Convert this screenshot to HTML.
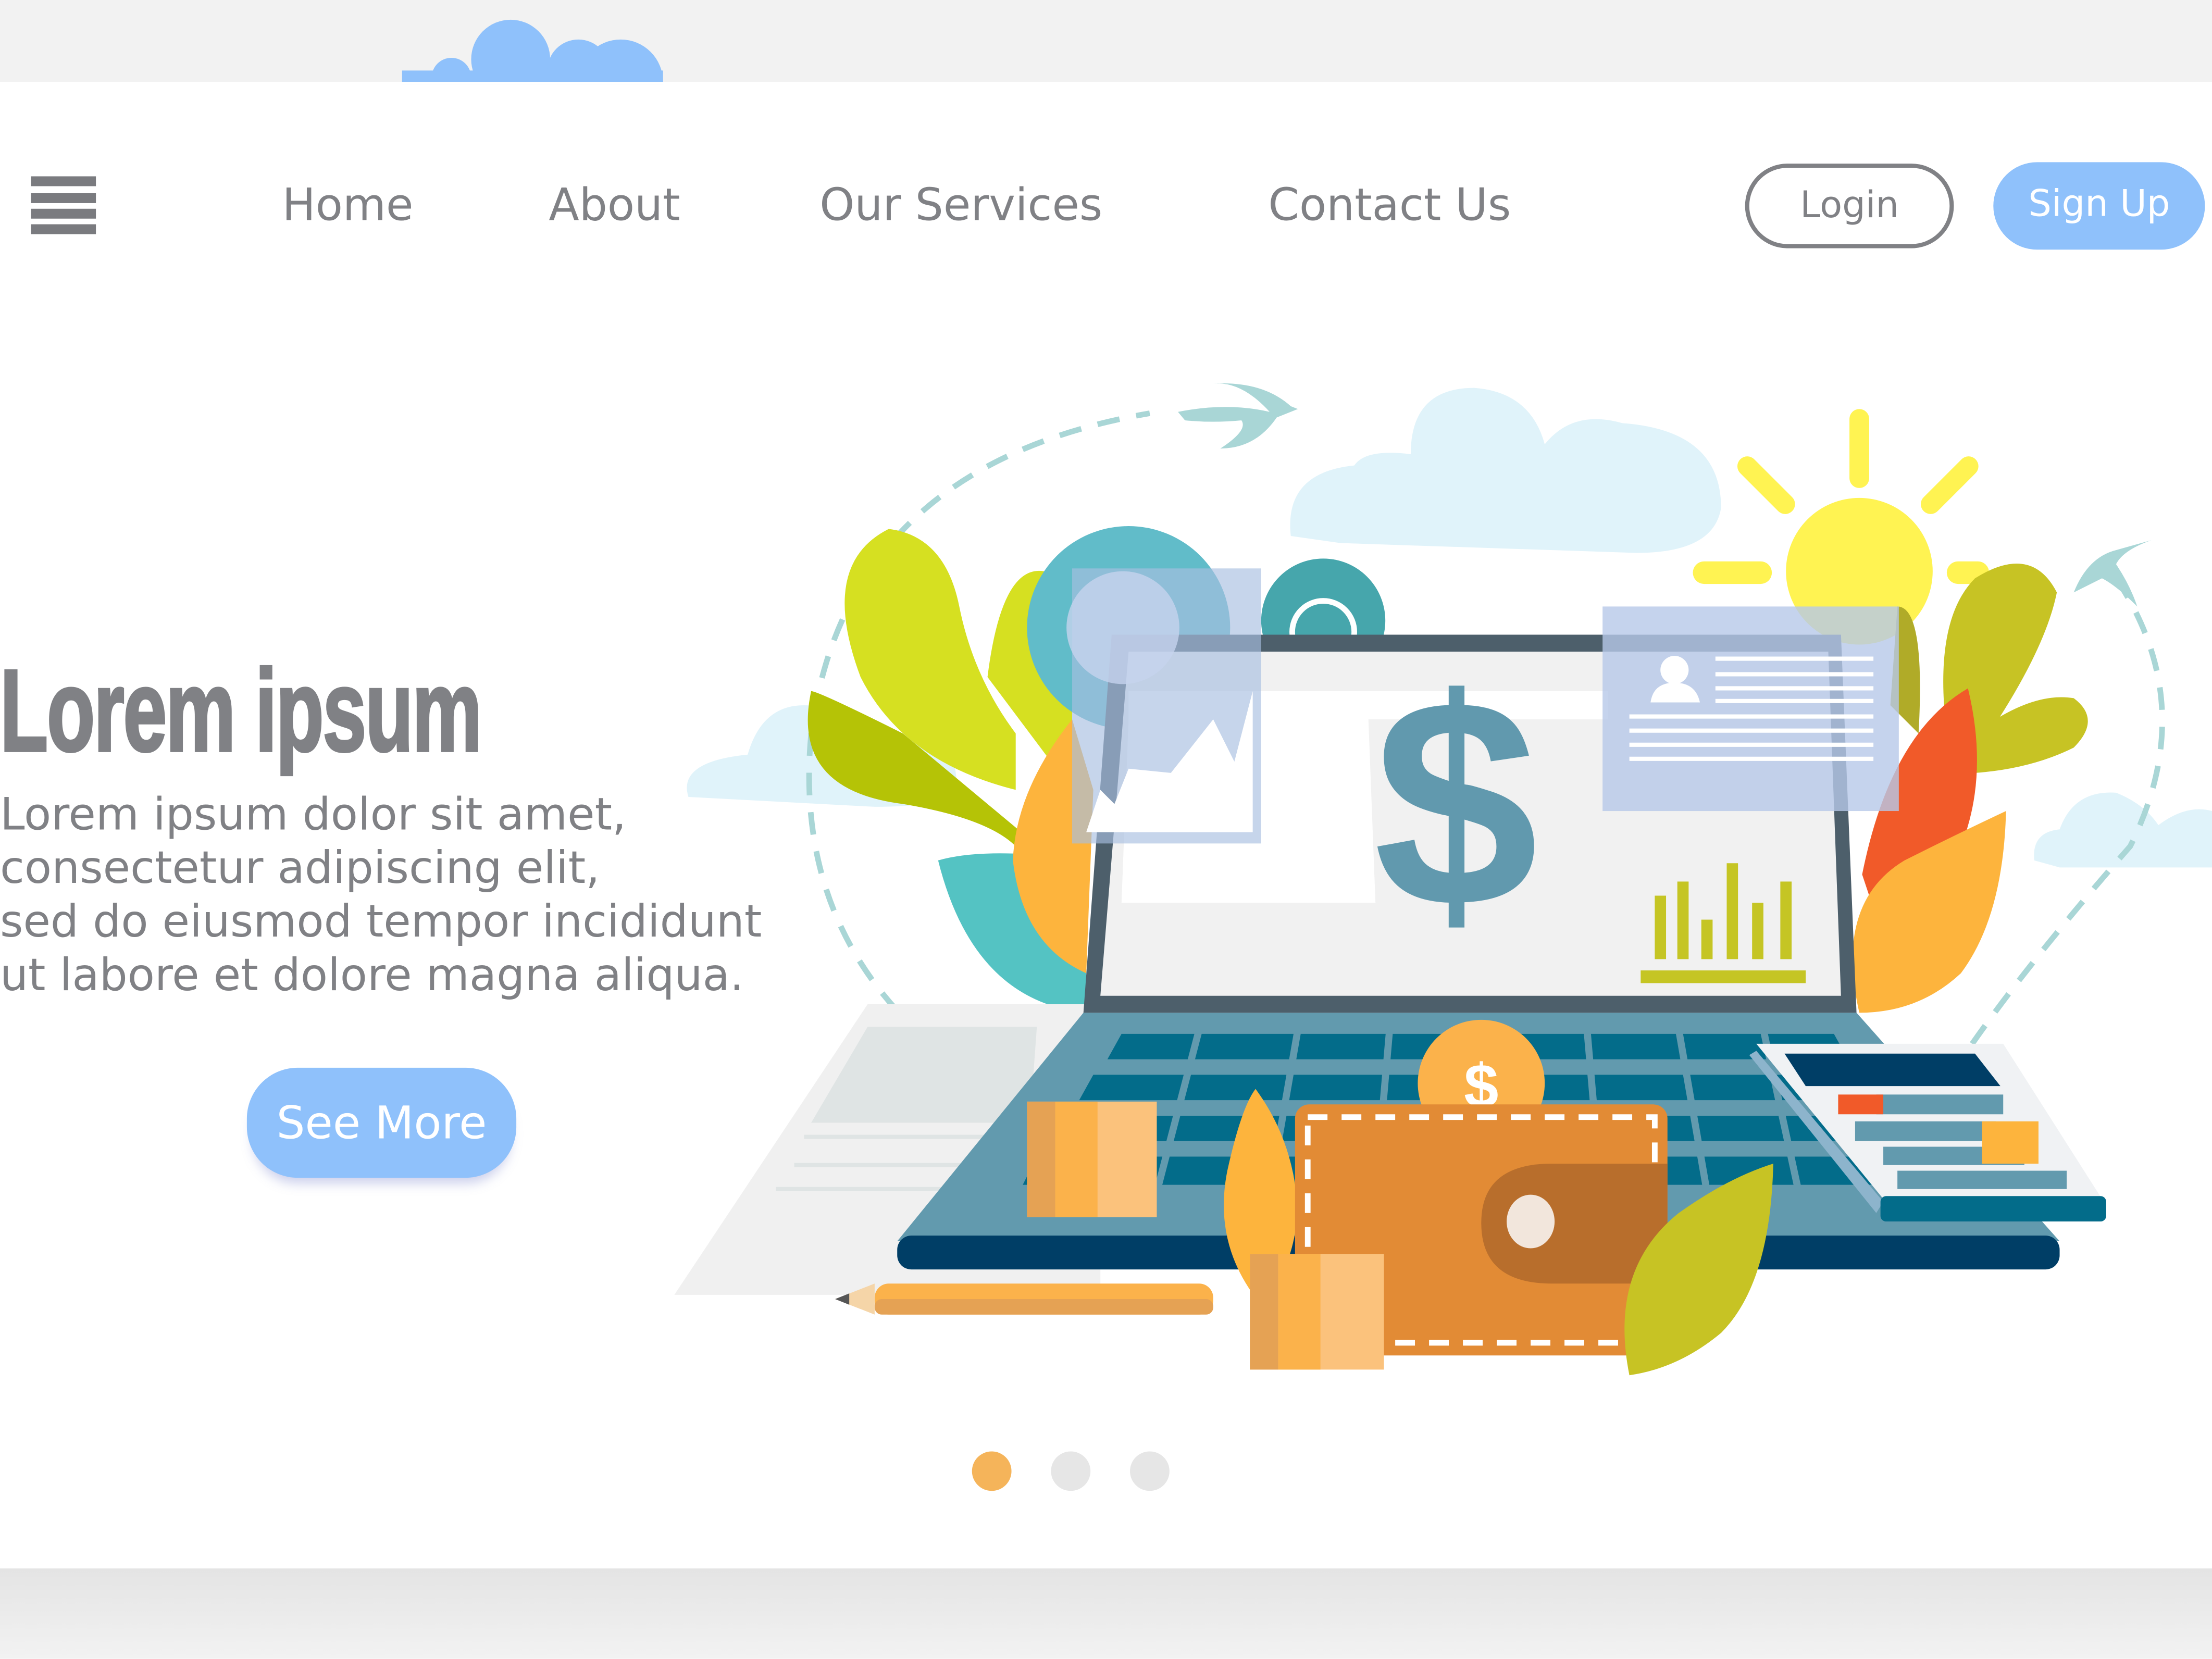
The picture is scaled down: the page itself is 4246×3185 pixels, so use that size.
<!DOCTYPE html>
<html><head><meta charset="utf-8"><style>
html,body{margin:0;padding:0;width:4246px;height:3185px;overflow:hidden;background:#fff}
#w{position:absolute;left:0;top:0;width:1568px;height:1176px;transform:scale(2.70791);transform-origin:0 0;font-family:"DejaVu Sans","Liberation Sans",sans-serif;color:#808185}
.a{position:absolute}
.nav{position:absolute;top:128px;font-size:31.5px;color:#808185;white-space:nowrap}
.ham{position:absolute;left:22px;width:46px;height:7px;background:#7a7b7f}
</style></head><body><div id="w">
<div class="a" style="left:0;top:0;width:1568px;height:58px;background:#f2f2f2"></div>
<div class="a" style="left:0;top:1112px;width:1568px;height:64px;background:linear-gradient(#e4e4e4,#f2f2f2)"></div>
<svg class="a" style="left:0;top:0" width="1568" height="60"><g fill="#8fc1fb"><circle cx="362" cy="42" r="28"/><circle cx="410" cy="50" r="22"/><circle cx="440" cy="58" r="30"/><circle cx="320" cy="55" r="14"/><rect x="285" y="50" width="185" height="10"/></g><rect x="0" y="58" width="1568" height="2" fill="#fff"/></svg>
<div class="ham" style="top:125px"></div><div class="ham" style="top:137px"></div><div class="ham" style="top:148px"></div><div class="ham" style="top:159px"></div>
<div class="nav" style="left:200px">Home</div>
<div class="nav" style="left:389px">About</div>
<div class="nav" style="left:581px">Our Services</div>
<div class="nav" style="left:899px">Contact Us</div>
<div class="a" style="left:1237px;top:116px;width:142px;height:54px;border:3px solid #808185;border-radius:30px;text-align:center;line-height:54px;font-size:26px">Login</div>
<div class="a" style="left:1413px;top:115px;width:150px;height:62px;background:#8fc1fb;border-radius:31px;text-align:center;line-height:60px;font-size:26px;color:#fff">Sign Up</div>
<div class="a" style="left:0;top:456px;font-family:'Liberation Sans Narrow','Liberation Sans',sans-serif;font-weight:bold;font-size:66px;color:#808185;letter-spacing:-1px;transform:scale(0.845,1.25);transform-origin:0 0;white-space:nowrap;-webkit-text-stroke:1.5px #808185">Lorem ipsum</div>
<div class="a" style="left:0;top:559px;font-size:31.5px;line-height:38px;white-space:nowrap">Lorem ipsum dolor sit amet,<br>consectetur adipiscing elit,<br>sed do eiusmod tempor incididunt<br>ut labore et dolore magna aliqua.</div>
<div class="a" style="left:175px;top:757px;width:191px;height:78px;background:#8fc1fb;border-radius:36px;text-align:center;line-height:78px;font-size:32px;color:#fff;box-shadow:0 8px 8px -4px rgba(110,120,200,0.35)">See More</div>
<svg class="a" style="left:0;top:0" width="1568" height="1176">
<g fill="#e6e6e6"><circle cx="759" cy="1043" r="14"/><circle cx="815" cy="1043" r="14"/></g>
<circle cx="703" cy="1043" r="14" fill="#f5b45a"/>
<g fill="#e0f3fa">
<path d="M915 380 Q910 335 960 330 Q968 318 1000 322 Q1000 275 1045 275 Q1085 278 1095 315 Q1115 290 1150 300 Q1220 305 1220 360 Q1215 392 1160 392 L950 385 Z"/>
<path d="M488 565 Q480 540 530 535 Q540 500 570 500 Q590 500 598 520 Q615 510 640 520 Q680 520 678 560 Q670 572 620 572 Z"/>
<path d="M1442 610 Q1440 590 1460 588 Q1470 560 1500 562 Q1520 570 1530 585 Q1550 570 1568 575 L1568 615 L1460 615 Z"/>
</g>
<path d="M700 770 Q560 680 575 520 Q600 330 815 293" fill="none" stroke="#a9d6d6" stroke-width="4" stroke-dasharray="16 12"/>
<path d="M1500 410 Q1560 500 1510 600 Q1440 680 1398 740" fill="none" stroke="#a9d6d6" stroke-width="4" stroke-dasharray="16 12"/>
<path d="M835 292 Q870 285 900 292 Q880 270 860 272 Q895 270 915 288 L920 290 L905 296 Q890 318 865 318 Q885 305 880 298 Q860 300 840 298Z" fill="#a9d6d6"/>
<path d="M1470 420 Q1480 395 1500 390 L1525 383 Q1505 390 1500 400 Q1510 415 1515 430 Q1500 415 1490 410Z" fill="#a9d6d6"/>
<g fill="#fff352"><circle cx="1318" cy="405" r="52"/>
<rect x="1311" y="290" width="14" height="56" rx="7"/>
<rect x="1200" y="398" width="56" height="16" rx="8"/>
<rect x="1380" y="398" width="30" height="16" rx="8"/>
<rect x="1245" y="318" width="14" height="52" rx="7" transform="rotate(-45 1252 344)"/>
<rect x="1375" y="318" width="14" height="52" rx="7" transform="rotate(45 1382 344)"/></g>
<path d="M720 560 Q640 540 610 480 Q580 400 630 375 Q670 380 680 430 Q690 480 720 520Z" fill="#d6e021"/>
<path d="M760 620 Q700 570 640 520 Q580 490 575 490 Q560 560 640 570 Q700 580 720 600Z" fill="#b5c306"/>
<path d="M700 480 Q710 400 740 405 L760 450 L760 560 Z" fill="#d6e021"/>
<path d="M665 610 Q700 600 770 610 L770 718 Q690 710 665 610Z" fill="#54c3c3"/>
<path d="M760 510 Q720 560 718 610 Q725 670 770 690 L775 560Z" fill="#fdb43d"/>
<path d="M1380 520 Q1370 440 1400 410 Q1440 385 1458 420 Q1450 460 1410 520Z" fill="#c7c324"/>
<path d="M1400 520 Q1440 490 1470 495 Q1490 510 1470 530 Q1440 545 1400 548Z" fill="#c7c324"/>
<path d="M1345 430 Q1365 430 1360 520 L1340 500Z" fill="#b0ab28"/>
<path d="M1320 620 Q1340 520 1395 488 Q1410 550 1390 600 Q1360 640 1330 650Z" fill="#f15a29"/>
<path d="M1318 718 Q1300 640 1350 610 Q1390 590 1422 575 Q1420 650 1390 690 Q1360 718 1318 718Z" fill="#fdb43d"/>
<circle cx="800" cy="445" r="72" fill="#61bcc9"/>
<circle cx="938" cy="440" r="44" fill="#46a6ac"/>
<circle cx="938" cy="448" r="22" fill="none" stroke="#fff" stroke-width="4"/>
<path d="M478 918 L615 712 L780 712 L780 918Z" fill="#f0f0f0"/>
<path d="M575 796 L615 728 L735 728 L730 796Z" fill="#dfe4e4"/>
<g stroke="#dfe4e4" stroke-width="3"><line x1="570" y1="806" x2="720" y2="806"/><line x1="563" y1="826" x2="720" y2="826"/><line x1="550" y1="843" x2="720" y2="843"/></g>
<path d="M768 718 L1316 718 L1460 880 L636 880Z" fill="#629aae"/>
<rect x="636" y="876" width="824" height="24" rx="10" fill="#003e66"/>
<g fill="#036c8a">
<path d="M795 733 L1300 733 L1310 751 L785 751Z"/>
<path d="M775 762 L1320 762 L1330 780 L765 780Z"/>
<path d="M755 791 L1340 791 L1350 809 L745 809Z"/>
<path d="M735 820 L1360 820 L1370 840 L725 840Z"/>
</g>
<g stroke="#629aae" stroke-width="5">
<line x1="850" y1="730" x2="820" y2="845"/><line x1="920" y1="730" x2="900" y2="845"/><line x1="985" y1="730" x2="975" y2="845"/><line x1="1060" y1="730" x2="1060" y2="845"/><line x1="1125" y1="730" x2="1135" y2="845"/><line x1="1190" y1="730" x2="1210" y2="845"/><line x1="1250" y1="730" x2="1275" y2="845"/>
</g>
<path d="M788 450 L1305 450 L1316 718 L768 718Z" fill="#4d5f6b"/>
<path d="M800 462 L1296 462 L1305 706 L780 706Z" fill="#f1f1f1"/>
<path d="M800 490 L1140 490 L1140 510 L800 510Z" fill="#fff"/>
<path d="M800 510 L970 510 L975 640 L795 640Z" fill="#fff"/>
<text x="1032" y="642" text-anchor="middle" font-family="Liberation Sans,sans-serif" font-weight="bold" font-size="210" fill="#6199ae">$</text>
<g fill="#c5c524"><rect x="1173" y="635" width="8" height="45"/><rect x="1189" y="625" width="8" height="55"/><rect x="1206" y="652" width="8" height="28"/><rect x="1224" y="612" width="8" height="68"/><rect x="1242" y="640" width="8" height="40"/><rect x="1262" y="625" width="8" height="55"/><rect x="1163" y="688" width="117" height="9"/></g>
<rect x="760" y="403" width="134" height="195" fill="#a8bfe0" opacity="0.65"/>
<circle cx="796" cy="445" r="40" fill="#c5d3ee" opacity="0.8"/>
<path d="M770 590 L780 560 L790 570 L800 545 L830 548 L860 510 L875 540 L888 490 L888 590Z" fill="#fff"/>
<rect x="1136" y="430" width="210" height="145" fill="#b6c8e8" opacity="0.8"/>
<circle cx="1187" cy="475" r="10" fill="#fff"/><path d="M1170 498 Q1172 484 1187 484 Q1202 484 1205 498Z" fill="#fff"/>
<g stroke="#fff" stroke-width="3"><line x1="1216" y1="467" x2="1328" y2="467"/><line x1="1216" y1="478" x2="1328" y2="478"/><line x1="1216" y1="488" x2="1328" y2="488"/><line x1="1216" y1="497" x2="1328" y2="497"/><line x1="1155" y1="508" x2="1328" y2="508"/><line x1="1155" y1="518" x2="1328" y2="518"/><line x1="1155" y1="528" x2="1328" y2="528"/><line x1="1155" y1="538" x2="1328" y2="538"/></g>
<path d="M1245 740 L1420 740 L1490 850 L1335 850Z" fill="#f0f2f4"/>
<path d="M1245 745 L1335 852 L1330 860 L1240 748Z" fill="#8db4cc"/>
<rect x="1333" y="848" width="160" height="18" rx="4" fill="#036c8a"/>
<path d="M1265 747 L1400 747 L1418 770 L1280 770Z" fill="#003e66"/>
<g fill="#629aae"><rect x="1330" y="776" width="90" height="14"/><rect x="1315" y="795" width="100" height="14"/><rect x="1335" y="813" width="100" height="13"/><rect x="1345" y="830" width="120" height="13"/></g>
<rect x="1303" y="776" width="32" height="14" fill="#f15a29"/><rect x="1405" y="795" width="40" height="30" fill="#fdb43d"/>
<circle cx="1050" cy="768" r="45" fill="#fbb24b"/>
<text x="1050" y="785" text-anchor="middle" font-family="Liberation Sans,sans-serif" font-weight="bold" font-size="44" fill="#fff">$</text>
<path d="M870 830 Q880 785 890 772 Q918 810 920 860 Q915 910 890 920 Q860 880 870 830Z" fill="#fdb43d"/>
<rect x="918" y="783" width="264" height="178" rx="10" fill="#e28b35"/>
<rect x="927" y="792" width="246" height="160" fill="none" stroke="#fff" stroke-width="4" stroke-dasharray="14 10"/>
<path d="M1100 825 L1182 825 L1182 910 L1100 910 Q1050 910 1050 867 Q1050 825 1100 825Z" fill="#b86e2c"/>
<ellipse cx="1085" cy="866" rx="17" ry="19" fill="#f2e6dc"/>
<path d="M1155 975 Q1140 900 1190 860 Q1225 835 1257 825 Q1255 910 1220 945 Q1190 970 1155 975Z" fill="#c7c324"/>
<g fill="#fbc27c"><rect x="728" y="781" width="92" height="82"/><rect x="886" y="889" width="95" height="82"/></g>
<g fill="#fbb24b"><rect x="748" y="781" width="30" height="82"/><rect x="906" y="889" width="30" height="82"/></g>
<g fill="#e5a254"><rect x="728" y="781" width="20" height="82"/><rect x="886" y="889" width="20" height="82"/></g>
<rect x="620" y="910" width="240" height="22" rx="10" fill="#fbb24b"/>
<rect x="620" y="921" width="240" height="11" rx="5" fill="#e5a254"/>
<path d="M620 910 L592 921 L620 932Z" fill="#f5d5a8"/><path d="M602 917 L592 921 L602 925Z" fill="#555"/>
</svg>
</div></body></html>
